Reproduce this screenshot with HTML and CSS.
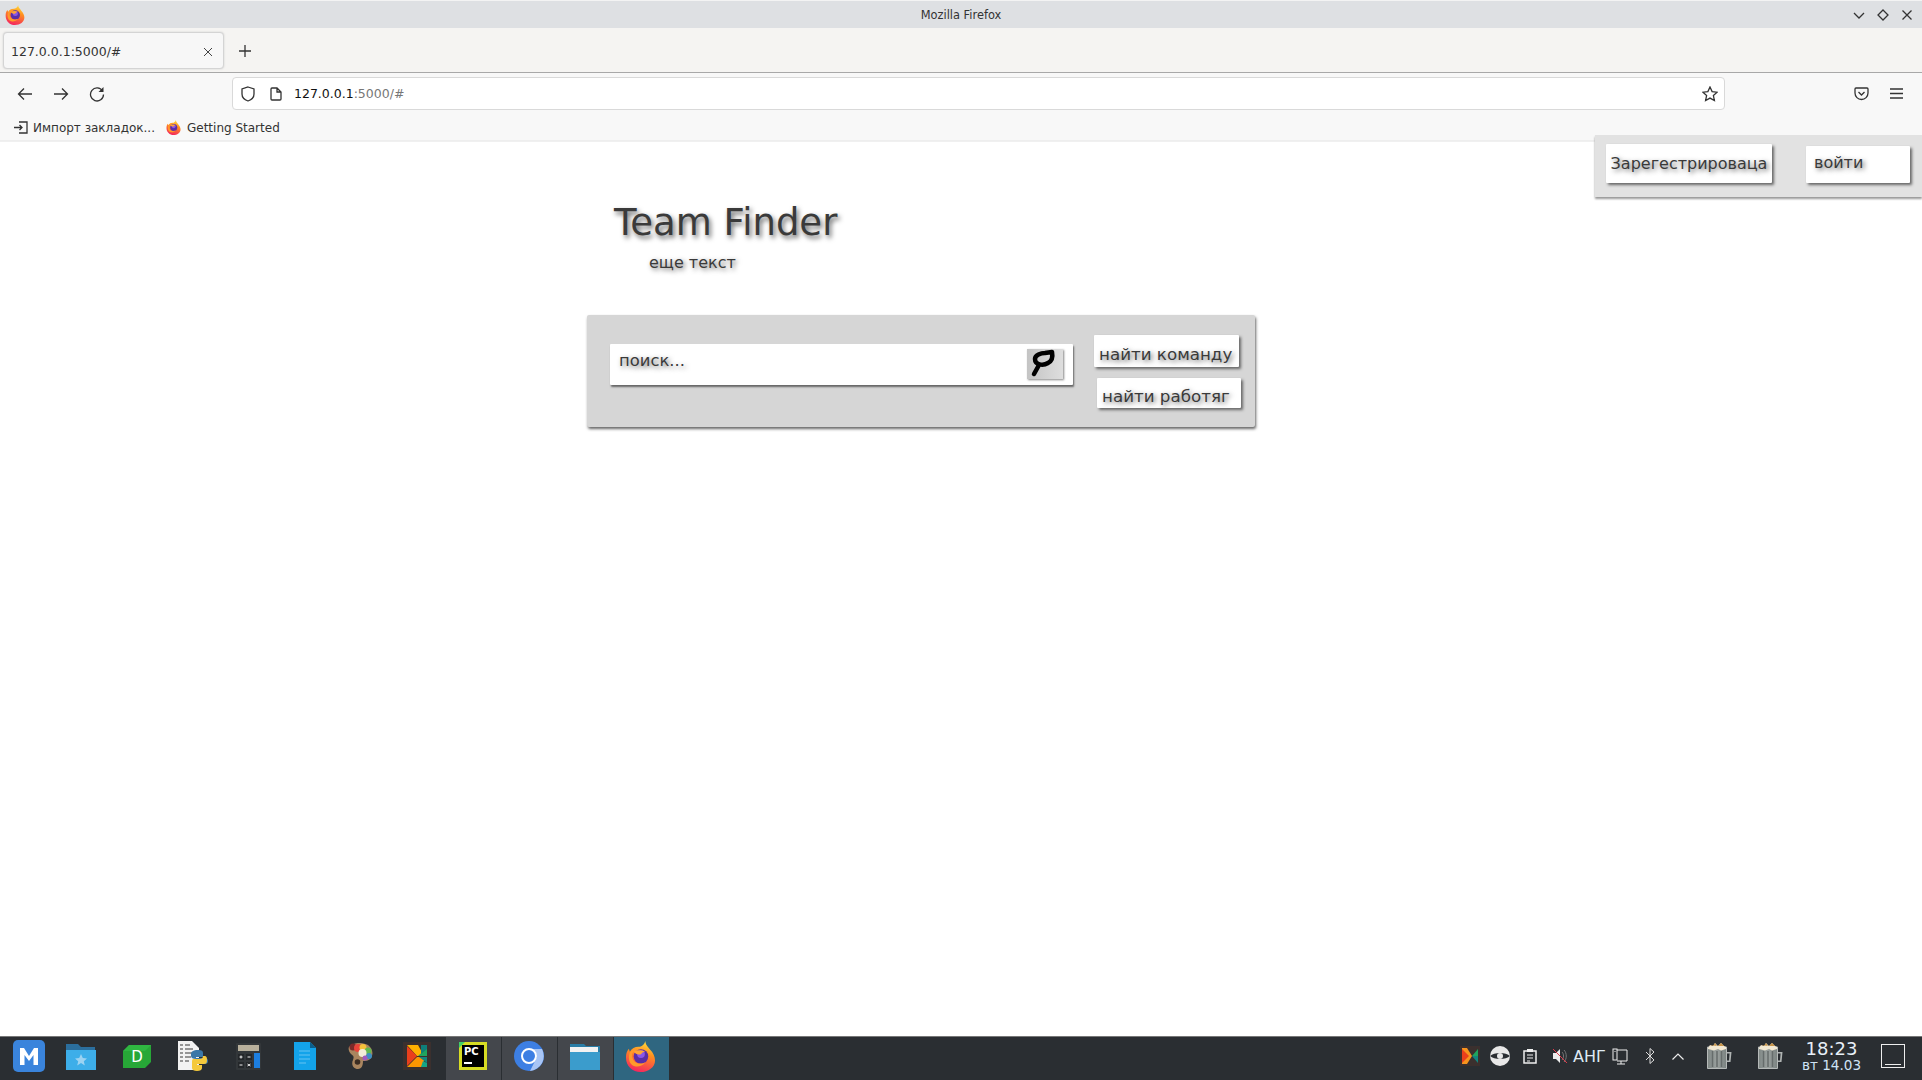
FILE: index.html
```html
<!DOCTYPE html>
<html lang="ru">
<head>
<meta charset="utf-8">
<title>Team Finder</title>
<link rel="stylesheet" href="styles.css">
</head>
<body>
<svg class="defs" width="0" height="0" aria-hidden="true">
  <defs>
    <linearGradient id="ffg" x1="0.7" y1="0" x2="0.4" y2="1">
      <stop offset="0" stop-color="#ffdf3e"/>
      <stop offset="0.4" stop-color="#ff8f1f"/>
      <stop offset="1" stop-color="#f4255f"/>
    </linearGradient>
    <linearGradient id="bing" x1="0" y1="0" x2="1" y2="0">
      <stop offset="0" stop-color="#7f8785"/>
      <stop offset="0.5" stop-color="#9aa09e"/>
      <stop offset="1" stop-color="#7a8280"/>
    </linearGradient>
    <symbol id="ff" viewBox="0 0 32 32">
      <path d="M21 0c0 4 3 6 5 9 3 3 5 7 5 11 0 7-7 12-15 12S1 26 1 17c0-4 1-7 3-9l1 3c2-3 5-5 9-5 3 0 6-2 7-6z" fill="url(#ffg)"/>
      <circle cx="16.500" cy="16" r="7.500" fill="#5a2ea6"/>
      <circle cx="16.500" cy="13.500" r="4" fill="#8a56e8"/>
      <path d="M4 17c0-6 4-10 9-10-1 2-2 3-5 5-1 1-1 5 1 8 3 4 9 4 12 2-3 4-8 5-11 4-4-1-6-5-6-9z" fill="#ff9a2a"/>
      <path d="M9 11c3-2 8-2 12 0-3 0-3 1-5 3-2 0-4 0-7-3z" fill="#ffa436"/>
    </symbol>
    <symbol id="bin" viewBox="0 0 26 26">
      <path d="M.5 4h19v21.500H.5z" fill="url(#bing)" stroke="#b5b9b8"/>
      <path d="M19.500 9h5l-1 10h-4v-1.500h2.500l.6-7h-3.100z" fill="#b0b4b3"/>
      <path d="M5.500 8v16M10 8v16M14.500 8v16" stroke="#666c6b" stroke-width="1.500"/>
      <path d="M1 5l2-3 3 1 2-3 3 3 3-3 3 3 2 1v2l-5 1.500-3-1.500-4 1.500-6-1.500z" fill="#f2e8d2"/>
      <path d="M3 2l3 1 2-3 2 3zM11 3l3-3 3 3z" fill="#c99447"/>
    </symbol>
  </defs>
</svg>

<header class="browser">
  <div class="titlebar">
    <svg class="ico-ff-title"><use href="#ff"/></svg>
    <span class="title-text">Mozilla Firefox</span>
    <div class="win-controls">
      <svg width="12" height="12" viewBox="0 0 12 12"><path d="M1 4l5 5 5-5" class="stroke"/></svg>
      <svg width="12" height="12" viewBox="0 0 12 12"><path d="M6 1l5 5-5 5-5-5z" class="stroke"/></svg>
      <svg width="12" height="12" viewBox="0 0 12 12"><path d="M1.500 1.500l9 9M10.500 1.500l-9 9" class="stroke"/></svg>
    </div>
  </div>

  <div class="tabstrip">
    <div class="tab">
      <span class="tab-label">127.0.0.1:5000/#</span>
      <svg width="10" height="10" viewBox="0 0 10 10"><path d="M1 1l8 8M9 1l-8 8" class="stroke thin"/></svg>
    </div>
    <svg class="newtab" width="12" height="12" viewBox="0 0 12 12"><path d="M6 0v12M0 6h12" class="stroke"/></svg>
  </div>

  <div class="toolbar">
    <div class="nav">
      <svg width="16" height="16" viewBox="0 0 16 16"><path d="M15 8H1.500M7 2.500L1.500 8 7 13.500" class="stroke"/></svg>
      <svg width="16" height="16" viewBox="0 0 16 16"><path d="M1 8h13.500M9 2.500L14.500 8 9 13.500" class="stroke"/></svg>
      <svg width="16" height="16" viewBox="0 0 16 16"><path d="M13.500 5A6.500 6.500 0 1 0 14.500 8.500" class="stroke"/><path d="M14.500 1v5h-5z" fill="#333"/></svg>
    </div>
    <div class="urlbar">
      <svg width="14" height="16" viewBox="0 0 14 16"><path d="M7 1l6 2v5c0 3.500-3 6-6 7-3-1-6-3.500-6-7V3z" class="stroke"/></svg>
      <svg class="ico-doc" width="12" height="14" viewBox="0 0 12 14"><path d="M1 2a1 1 0 0 1 1-1h5l4 4v7a1 1 0 0 1-1 1H2a1 1 0 0 1-1-1zM7 1v4h4" class="stroke"/></svg>
      <span class="url"><b>127.0.0.1</b>:5000/#</span>
      <svg class="ico-star" width="16" height="16" viewBox="0 0 16 16"><path d="M8 1l2.100 4.600 5 .6-3.700 3.400 1 5L8 12.100 3.600 14.600l1-5L.9 6.200l5-.6z" class="stroke"/></svg>
    </div>
    <div class="tools">
      <svg width="15" height="14" viewBox="0 0 15 14"><path d="M2 1h11a1 1 0 0 1 1 1v4a6.500 6.500 0 0 1-13 0V2a1 1 0 0 1 1-1z" class="stroke"/><path d="M4.500 5l3 3 3-3" class="stroke"/></svg>
      <svg width="13" height="11" viewBox="0 0 13 11"><path d="M0 1h13M0 5.500h13M0 10h13" class="stroke"/></svg>
    </div>
  </div>

  <div class="bookmarks">
    <span class="bm bm-import">
      <svg width="14" height="13" viewBox="0 0 14 13"><path d="M5 1h8v11H5M0 6.500h8M5.500 4l2.500 2.500L5.500 9" class="stroke"/></svg>
      Импорт закладок...
    </span>
    <span class="bm">
      <svg class="ico-ff-bm"><use href="#ff"/></svg>
      Getting Started
    </span>
  </div>
</header>

<main class="page">
  <aside class="auth-panel">
    <a class="btn btn-register">Зарегестрироваца</a>
    <a class="btn btn-login">войти</a>
  </aside>

  <section class="hero">
    <h1 class="hero-title">Team Finder</h1>
    <p class="hero-sub">еще текст</p>
  </section>

  <section class="search-card">
    <div class="search-input">
      <span class="placeholder">поиск...</span>
      <span class="search-btn">
        <svg width="36" height="30" viewBox="0 0 36 30"><path d="M8 10C8 6 14 4 18 4L25 3C26 8 25 12 21 14 16 17 8 16 8 10zM12 16L7 25" fill="none" stroke="#000" stroke-width="4.500" stroke-linecap="round" stroke-linejoin="round"/></svg>
      </span>
    </div>
    <div class="search-actions">
      <a class="btn btn-team">найти команду</a>
      <a class="btn btn-workers">найти работяг</a>
    </div>
  </section>
</main>

<footer class="taskbar">
  <div class="task task-first">
    <svg width="32" height="32" viewBox="0 0 32 32"><rect width="32" height="32" rx="5" fill="#3a84dc"/><path d="M7 25V8h4l5 8 5-8h4v17h-4.500V15L16 21l-4.500-6v10z" fill="#fff"/></svg>
  </div>
  <div class="task">
    <svg width="30" height="27" viewBox="0 0 30 27"><path d="M0 1h12l3 3h14v6H0z" fill="#2b6f9e"/><path d="M0 7h30v20H0z" fill="#3daee9"/><path d="M15 11l1.800 4 4.200.4-3.200 2.800 1 4.200-3.800-2.300-3.800 2.300 1-4.200L9 15.400l4.200-.4z" fill="#9cd3f2"/></svg>
  </div>
  <div class="task">
    <svg width="28" height="26" viewBox="0 0 28 26"><path d="M6 2h22v17l-6 6H0V8z" fill="#27a737"/><path d="M0 8l6-6h22L22 8z" fill="#35bf47" opacity=".6"/><text x="14" y="19" class="ico-d">D</text></svg>
  </div>
  <div class="task">
    <svg width="31" height="32" viewBox="0 0 31 32"><path d="M1 1h14l7 7v22H1z" fill="#f2f2f2"/><path d="M3 5h3M8 5h5M3 9h3M8 9h8M3 13h3M8 13h9M3 17h3M8 17h6M3 21h3M8 21h4" stroke="#777" stroke-width="1.500"/><path d="M21 10c4 0 5 1 5 3v4h-7v1h9c2 0 3 1 3 3s-1 3-3 3h-1v-2c0-2-2-3-4-3h-4c-3 0-5-1-5-3v-2c0-2 2-4 7-4z" fill="#3a77a8"/><path d="M16 19h6c3 0 4-1 4-3h1c3 0 3 2 3 4 0 3-1 4-3 4h-7v1h5v3c0 2-2 3-5 3s-5-1-5-3v-4c0-2 0-5 1-5z" fill="#f5c93c"/></svg>
  </div>
  <div class="task">
    <svg width="25" height="27" viewBox="0 0 25 27"><rect width="25" height="27" rx="1" fill="#33373a"/><rect x="2" y="2" width="21" height="6" fill="#b8b09c"/><path d="M2 11h6v6H2zM10 11h6v6h-6zM2 19h6v6H2zM10 19h6v6h-6z" fill="#24272a"/><path d="M3.500 14h3M5 12.500v3M11.500 14h3M3.500 22h3M11.500 21l3 2M14.500 21l-3 2" stroke="#eee"/><rect x="18" y="10" width="6" height="15" fill="#1d7fe0"/></svg>
  </div>
  <div class="task">
    <svg width="22" height="28" viewBox="0 0 22 28"><path d="M0 0h16l6 6v22H0z" fill="#13a3ea"/><path d="M16 0l6 6h-6z" fill="#0b5f8c"/><path d="M5 9h11M5 13h11M5 17h11M5 21h7" stroke="#67c4f2" stroke-width="1.200"/></svg>
  </div>
  <div class="task">
    <svg width="25" height="26" viewBox="0 0 25 26"><path d="M1 4C5-1 14-1 20 2c4 3 6 8 3 13-2 3-6 3-8 3 0 4-1 8-5 8-5 0-7-5-5-9 1-3 1-4-2-6-2-2-3-5-2-7z" fill="#a9855f"/><circle cx="5" cy="4" r="3.500" fill="#7b2a2a"/><circle cx="10" cy="5" r="4" fill="#e8433a"/><circle cx="15" cy="4.500" r="3.500" fill="#f5c23a"/><circle cx="20" cy="8" r="3.500" fill="#62b84f"/><circle cx="21" cy="13" r="3" fill="#3d8fc4"/><circle cx="14.500" cy="10" r="4" fill="#f3eed8"/><circle cx="17" cy="15" r="2.500" fill="#a05bc0"/><circle cx="9.500" cy="19" r="2.800" fill="#3a2c22"/></svg>
  </div>
  <div class="task">
    <svg width="28" height="28" viewBox="0 0 28 28"><rect width="28" height="28" fill="#3b302e"/><path d="M4 3h11l6 11h-7z" fill="#ffb000"/><path d="M4 4l10 10L4 24z" fill="#ea3f1c"/><path d="M4 25l10-10h7v10z" fill="#ff9500"/><path d="M15 14l9-8v8z" fill="#1fa45e"/><path d="M18 3h6v4l-6 5z" fill="#0e7f7a"/><path d="M16 15h8v6z" fill="#12857f"/><path d="M20 19l4 2v4h-6z" fill="#14a585"/></svg>
  </div>
  <div class="task task-open">
    <svg width="28" height="28" viewBox="0 0 28 28"><rect width="28" height="28" fill="#d7dc24"/><path d="M0 0h6L0 6z" fill="#3ecf6a"/><rect x="3" y="3" width="22" height="22" fill="#000"/><text x="5" y="13" class="ico-pc">PC</text><path d="M5 21h8" stroke="#fff" stroke-width="2"/></svg>
  </div>
  <div class="task task-open">
    <svg width="30" height="30" viewBox="0 0 30 30"><circle cx="15" cy="15" r="15" fill="#3d7fe3"/><path d="M15 8h13a15 15 0 0 1-12 22l6-12a7 7 0 0 0-7-10z" fill="#a8c5f5"/><circle cx="15" cy="15" r="7" fill="#3d7fe3" stroke="#fff" stroke-width="2"/></svg>
  </div>
  <div class="task task-open">
    <svg width="30" height="28" viewBox="0 0 30 28"><path d="M0 2h14l2 2h14v6H0z" fill="#2a7da6"/><rect y="5" width="28" height="5" fill="#f2f2f2"/><path d="M0 10h30v18H0z" fill="#3b9ccc"/></svg>
  </div>
  <div class="task task-active">
    <svg class="ico-ff-task"><use href="#ff"/></svg>
  </div>

  <div class="tray">
    <svg class="tray-k" width="20" height="20" viewBox="0 0 20 20"><rect width="20" height="20" fill="#3b302e"/><path d="M2 2h5l5 8-5 8H2z" fill="#f7941d"/><path d="M2 3l7 7-7 7z" fill="#ea3f1c"/><path d="M12 10l6-7v7z" fill="#1fa45e"/><path d="M12 10h6v7z" fill="#12857f"/></svg>
    <svg class="tray-eye" width="20" height="20" viewBox="0 0 20 20"><circle cx="10" cy="10" r="10" fill="#e8e8e8"/><path d="M0 10c4-4 16-4 20 0-4 4-16 4-20 0z" fill="#2a2e32"/><circle cx="10" cy="10" r="3" fill="#e8e8e8"/></svg>
    <svg class="tray-clip" width="14" height="16" viewBox="0 0 14 16"><path d="M1 3h12v12H1z" fill="none" stroke="#eee" stroke-width="1.500"/><path d="M4 1h6v3H4z" fill="#eee"/><path d="M4 7h6M4 10h6M4 13h3" stroke="#eee"/></svg>
    <svg class="tray-sound" width="16" height="16" viewBox="0 0 16 16"><path d="M1 5h3l4-4v14l-4-4H1z" fill="#eee"/><path d="M10 4c2 2 2 6 0 8M12 2c3 3 3 9 0 12" fill="none" stroke="#777"/><path d="M1 1l14 14" stroke="#e0394a"/></svg>
    <span class="tray-lang">АНГ</span>
    <svg class="tray-mon" width="16" height="17" viewBox="0 0 16 17"><path d="M5 2h10v11H5M9 13v3M5 16h8" fill="none" stroke="#eee"/><rect x="1" y="1" width="4" height="11" fill="#2a2e32" stroke="#eee"/><path d="M2.500 3.500h1" stroke="#eee"/></svg>
    <svg class="tray-bt" width="10" height="16" viewBox="0 0 10 16"><path d="M1 4l8 8-4 3.500V.5l4 3.500-8 8" fill="none" stroke="#ddd"/></svg>
    <svg class="tray-up" width="12" height="7" viewBox="0 0 12 7"><path d="M0.500 6.500L6 1l5.500 5.500" fill="none" stroke="#eee" stroke-width="1.200"/></svg>
    <svg class="tray-bin1"><use href="#bin"/></svg>
    <svg class="tray-bin2"><use href="#bin"/></svg>
    <div class="clock">
      <span class="clock-time">18:23</span>
      <span class="clock-date">вт 14.03</span>
    </div>
    <span class="show-desktop"></span>
  </div>
</footer>
</body>
</html>
```

FILE: styles.css
```css
* { box-sizing: border-box; }
html, body { margin: 0; height: 100%; }
body {
  width: 1922px;
  height: 1080px;
  display: flex;
  flex-direction: column;
  overflow: hidden;
  font-family: "DejaVu Sans", sans-serif;
  background: #fff;
  color: #333;
}
.defs { display: block; width: 0; height: 0; overflow: hidden; flex: none; }
svg { display: block; flex: none; }
.stroke { fill: none; stroke: #333; stroke-width: 1.300; }
.thin { stroke-width: 1; stroke: #444; }

/* browser chrome */
.browser { flex: none; height: 142px; display: flex; flex-direction: column; border-bottom: 1px solid #f0f0f0; }
.titlebar { height: 28px; background: #dee0e3; border-top: 1px solid #f3f3f3; position: relative; display: flex; align-items: center; padding-left: 5px; }
.ico-ff-title { width: 20px; height: 20px; }
.title-text { position: absolute; left: 0; right: 0; text-align: center; font-size: 11.400px; color: #333; }
.win-controls { margin-left: auto; display: flex; gap: 12px; padding-right: 9px; }
.tabstrip { height: 45px; background: #f5f4f2; border-bottom: 1px solid #a8a8a8; display: flex; align-items: center; padding-left: 3px; padding-bottom: 2px; }
.tab { width: 221px; height: 37px; margin-top: 3px; display: flex; align-items: center; justify-content: space-between; padding: 2px 10px 0 7px; background: #f7f7f7; border: 1px solid #d4d4d4; border-radius: 4px; box-shadow: 0 0 2px #ccc; }
.tab-label { font-size: 12.500px; color: #333; }
.newtab { margin-left: 15px; margin-top: 4px; }
.toolbar { height: 42px; background: #f8f8f8; display: flex; align-items: center; padding-left: 17px; padding-bottom: 1px; }
.nav { display: flex; gap: 20px; width: 215px; }
.urlbar { width: 1493px; height: 33px; background: #fff; border: 1px solid #d9d9d9; border-radius: 4px; display: flex; align-items: center; padding: 0 6px 0 8px; }
.ico-doc { margin-left: 15px; }
.url { margin-left: 12px; font-size: 12.500px; color: #777; }
.url b { font-weight: normal; color: #111; }
.ico-star { margin-left: auto; }
.tools { display: flex; align-items: center; gap: 21px; margin-left: 129px; }
.bookmarks { flex: 1; background: #f8f8f8; display: flex; align-items: center; padding-left: 14px; font-size: 12px; color: #333; gap: 11px; border-bottom: 1px solid #eee; }
.bm { display: flex; align-items: center; gap: 6px; }
.bm-import { gap: 5px; }
.ico-ff-bm { width: 15px; height: 15px; }

/* page */
.page { flex: 1; position: relative; padding: 0 0 0 587px; min-height: 0; }
.auth-panel { position: absolute; top: -7px; right: 0; width: 327px; height: 62px; background: #e2e2e2; box-shadow: 0 2px 2px #999; display: flex; padding: 9px 12px 0 11px; justify-content: space-between; align-items: flex-start; }
.btn { display: block; background: #fff; color: #3a3a3a; border-radius: 1px; box-shadow: 2px 2px 3px #666; text-shadow: 2px 2px 5px #666; white-space: nowrap; }
.btn-register { width: 166px; height: 39px; padding-top: 10px; text-align: center; font-size: 16px; }
.btn-login { width: 104px; height: 37px; margin-top: 2px; padding: 7px 0 0 8px; font-size: 16px; }

.hero { margin-left: 27px; padding-top: 59px; height: 173px; }
.hero-title { margin: 0; font-size: 37px; font-weight: normal; line-height: 44px; color: #3a3a3a; text-shadow: 2px 3px 5px #666; }
.hero-sub { margin: 8px 0 0 35px; font-size: 16px; line-height: 20px; color: #3a3a3a; text-shadow: 2px 2px 5px #666; }

.search-card { width: 668px; height: 112px; background: #d6d6d6; border-radius: 2px; box-shadow: 1px 2px 3px #666; display: flex; padding: 20px 12px 0 23px; }
.search-input { width: 463px; height: 41px; margin-top: 9px; background: #fff; box-shadow: 1px 2px 2px #666; border-radius: 1px; display: flex; align-items: flex-start; justify-content: space-between; padding: 5px 10px 0 9px; }
.placeholder { font-size: 16.400px; line-height: 24px; color: #3a3a3a; text-shadow: 2px 2px 5px #666; }
.search-btn { width: 36px; height: 30px; background: linear-gradient(90deg, #c4c4c4, #dedede); box-shadow: 1px 1px 2px #888; }
.search-actions { margin-left: 21px; display: flex; flex-direction: column; align-items: flex-start; gap: 11px; }
.btn-team { width: 145px; height: 32px; padding: 9px 0 0 5px; font-size: 16.700px; }
.btn-workers { width: 144px; height: 30px; margin-left: 3px; padding: 8px 0 0 5px; font-size: 16.700px; }

/* taskbar */
.taskbar { flex: none; height: 44px; background: #2a2e32; border-top: 1px solid #777; display: flex; padding-left: 4px; align-items: stretch; }
.task { width: 55px; margin-right: 1px; padding: 0 2px 5px 0; display: flex; align-items: center; justify-content: center; }
.task-first { width: 50px; margin-right: 0; padding-right: 0; }
.task-open { background: #44474c; }
.task-active { background: #2f6680; }
.ico-ff-task { width: 31px; height: 31px; }
.ico-d { font-family: "DejaVu Sans", sans-serif; font-size: 15px; fill: #fff; text-anchor: middle; }
.ico-pc { font-family: "DejaVu Sans", sans-serif; font-size: 10px; font-weight: bold; fill: #fff; }

.tray { margin-left: 790px; padding-bottom: 5px; display: flex; align-items: center; color: #eef; }
.tray-eye { margin-left: 10px; }
.tray-clip { margin-left: 13px; }
.tray-sound { margin-left: 15px; }
.tray-lang { margin-left: 5px; width: 33px; font-size: 16px; color: #dfeaf5; white-space: nowrap; }
.tray-mon { margin-left: 6px; }
.tray-bt { margin-left: 17px; }
.tray-up { margin-left: 17px; }
.tray-bin1 { margin-left: 23px; width: 26px; height: 26px; }
.tray-bin2 { margin-left: 25px; width: 26px; height: 26px; }
.clock { margin-left: 18px; margin-top: 1px; width: 59px; display: flex; flex-direction: column; align-items: center; line-height: 1; }
.clock-time { font-size: 18px; color: #e8f0f8; }
.clock-date { font-size: 13.600px; margin-top: 1px; color: #cfe3f5; white-space: nowrap; }
.show-desktop { margin-left: 20px; width: 24px; height: 24px; border: 1px solid #eee; background: linear-gradient(#eee, #eee) no-repeat 3px 19px / 16px 1px; }
```
